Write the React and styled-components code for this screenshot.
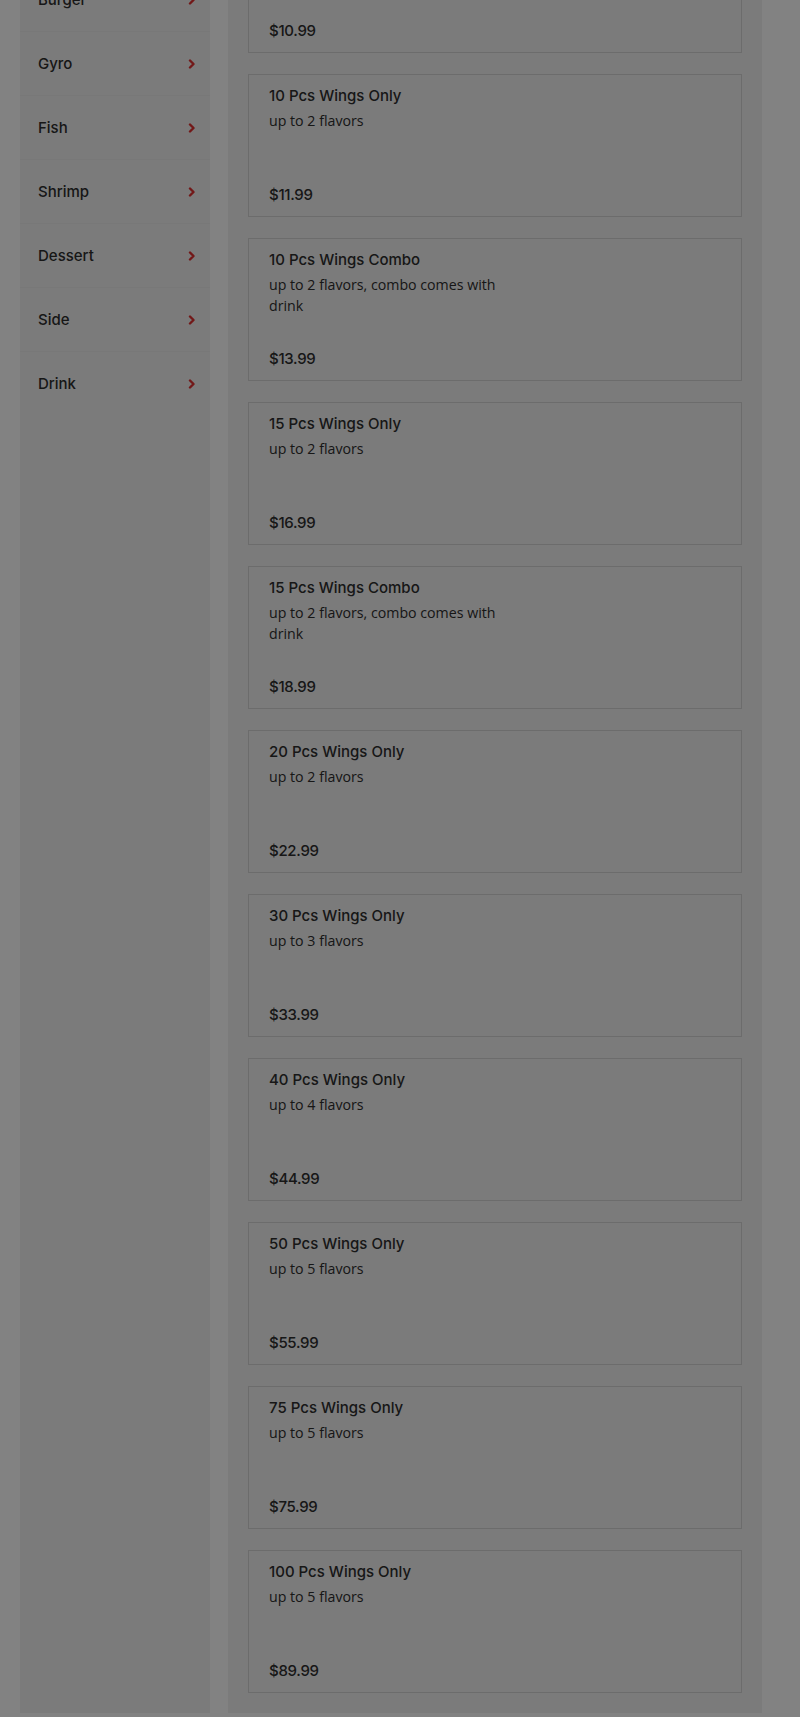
import React from "react";
import styled, { createGlobalStyle } from "styled-components";

const GlobalStyle = createGlobalStyle`
  html, body {
    margin: 0;
    padding: 0;
    background: #fff;
    overflow: hidden;
  }
  * {
    box-sizing: border-box;
  }
`;

// page is scrolled down while the modal is open
const Page = styled.div`
  display: flex;
  align-items: stretch;
  gap: 18px;
  width: 762px;
  margin-top: -274px;
  padding: 0 0 4px 20px;
`;

const Sidebar = styled.aside`
  flex: 0 0 190px;
  background: #f1f1f1;
  padding-top: 50px;
`;

const CategoryList = styled.ul`
  list-style: none;
  margin: 0;
  padding: 0;
`;

const Category = styled.li`
  display: flex;
  align-items: center;
  justify-content: space-between;
  height: 64px;
  padding: 0 14px 0 18px;
  border-bottom: 1px solid ${({ last }) => (last ? "transparent" : "#ececec")};
  font-family: "Inter", "Liberation Sans", sans-serif;
  font-size: 15px;
  font-weight: 500;
  color: #2e2e2e;
`;

const Main = styled.main`
  flex: 0 0 534px;
  background: #f1f1f1;
  padding: 20px 20px 20px 20px;
  display: flex;
  flex-direction: column;
  gap: 21px;
`;

const Card = styled.div`
  display: flex;
  flex-direction: column;
  height: 143px;
  padding: 11px 20px;
  border: 1px solid #d4d4d4;
  background: #f1f1f1;
  color: #2e2e2e;
`;

const Title = styled.div`
  font-family: "Inter", "Liberation Sans", sans-serif;
  font-size: 15px;
  font-weight: 500;
  line-height: 20px;
`;

const Desc = styled.p`
  margin: 4px 0 0;
  max-width: 250px;
  font-family: "Open Sans", sans-serif;
  font-size: 14.2px;
  line-height: 21px;
  color: #2e2e2e;
`;

const Price = styled.div`
  margin-top: auto;
  font-family: "Inter", "Liberation Sans", sans-serif;
  font-size: 15px;
  font-weight: 500;
  line-height: 20px;
  letter-spacing: -0.3px;
`;

const Overlay = styled.div`
  position: fixed;
  inset: 0;
  background: rgba(0, 0, 0, 0.49);
`;

const Chevron = () => (
  <svg width="8" height="10" viewBox="0 0 8 10">
    <path
      d="M2 1.5 L5.5 5 L2 8.5"
      fill="none"
      stroke="#e03030"
      strokeWidth="2.4"
      strokeLinecap="round"
      strokeLinejoin="round"
    />
  </svg>
);

const categories = ["Wings", "Tenders", "Combo", "Burger", "Gyro", "Fish", "Shrimp", "Dessert", "Side", "Drink"];

const items = [
  { name: "6 Pcs Wings Only", desc: "up to 1 flavor", price: "$8.99" },
  { name: "6 Pcs Wings Combo", desc: "up to 1 flavor, combo comes with drink", price: "$10.99" },
  { name: "10 Pcs Wings Only", desc: "up to 2 flavors", price: "$11.99" },
  { name: "10 Pcs Wings Combo", desc: "up to 2 flavors, combo comes with drink", price: "$13.99" },
  { name: "15 Pcs Wings Only", desc: "up to 2 flavors", price: "$16.99" },
  { name: "15 Pcs Wings Combo", desc: "up to 2 flavors, combo comes with drink", price: "$18.99" },
  { name: "20 Pcs Wings Only", desc: "up to 2 flavors", price: "$22.99" },
  { name: "30 Pcs Wings Only", desc: "up to 3 flavors", price: "$33.99" },
  { name: "40 Pcs Wings Only", desc: "up to 4 flavors", price: "$44.99" },
  { name: "50 Pcs Wings Only", desc: "up to 5 flavors", price: "$55.99" },
  { name: "75 Pcs Wings Only", desc: "up to 5 flavors", price: "$75.99" },
  { name: "100 Pcs Wings Only", desc: "up to 5 flavors", price: "$89.99" },
];

const App = () => {
  return (
    <>
      <GlobalStyle />
      <Page>
        <Sidebar>
          <CategoryList>
            {categories.map((c, i) => (
              <Category key={c} last={i === categories.length - 1}>
                <span>{c}</span>
                <Chevron />
              </Category>
            ))}
          </CategoryList>
        </Sidebar>
        <Main>
          {items.map((item) => (
            <Card key={item.name}>
              <Title>{item.name}</Title>
              <Desc>{item.desc}</Desc>
              <Price>{item.price}</Price>
            </Card>
          ))}
        </Main>
      </Page>
      <Overlay />
    </>
  );
};

export default App;
